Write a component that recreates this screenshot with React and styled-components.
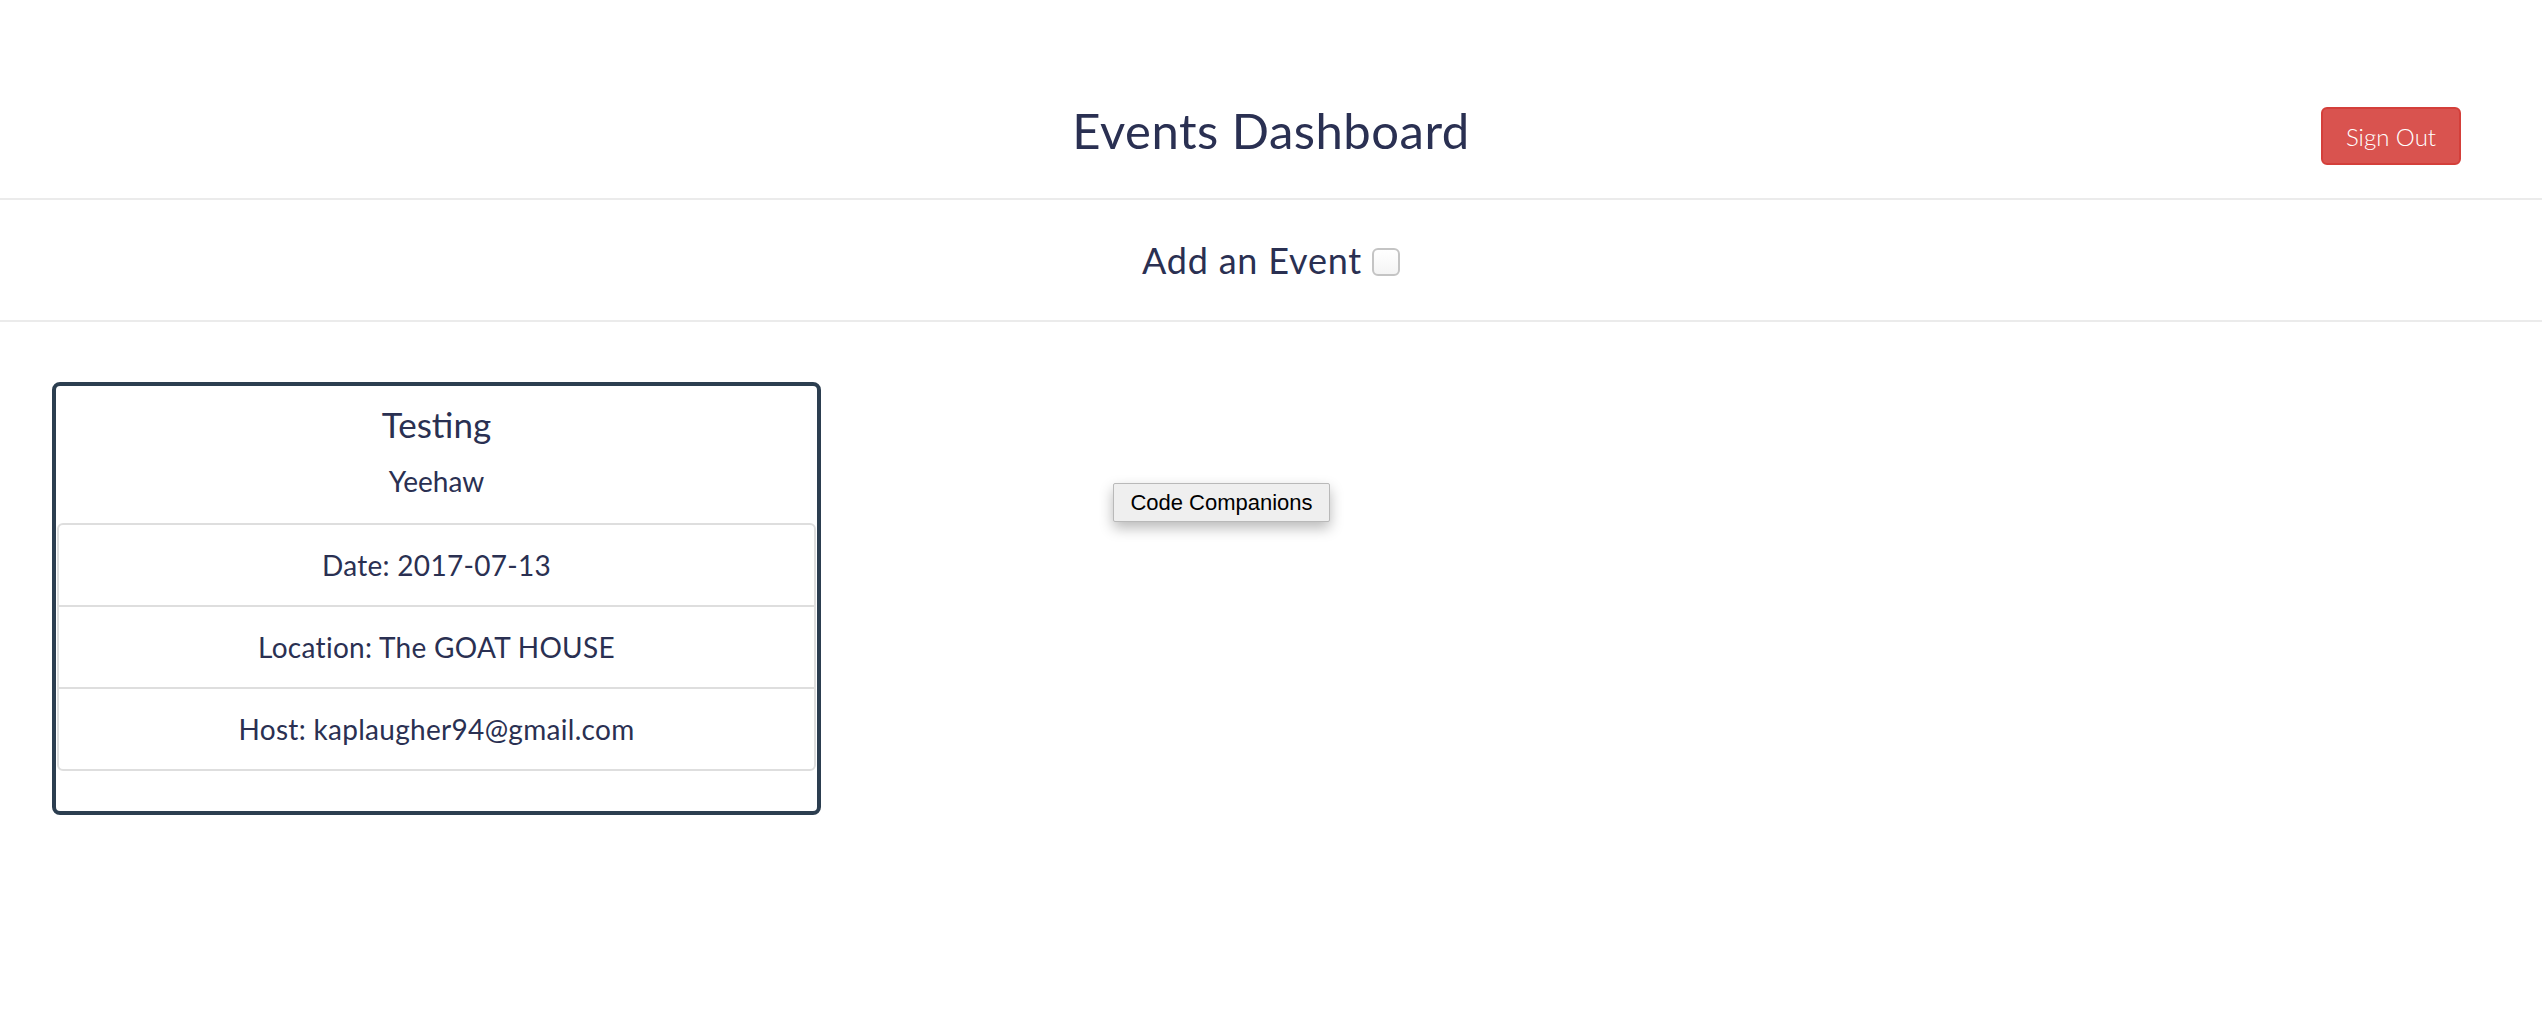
import React, { useState } from 'react';
import styled, { createGlobalStyle } from 'styled-components';

const event = {
  title: 'Testing',
  description: 'Yeehaw',
  date: '2017-07-13',
  location: 'The GOAT HOUSE',
  host: 'kaplaugher94@gmail.com',
};

const App = () => {
  const [showForm, setShowForm] = useState(false);

  return (
    <Page>
      <GlobalStyle />
      <Header>
        <span />
        <Title>Events Dashboard</Title>
        <SignOutButton type="button">Sign Out</SignOutButton>
      </Header>
      <AddBar>
        <AddLabel>
          Add an Event
          <Toggle type="checkbox" checked={showForm} onChange={() => setShowForm(!showForm)} />
        </AddLabel>
      </AddBar>
      <EventsArea>
        <EventCard>
          <EventTitle>{event.title}</EventTitle>
          <EventDescription>{event.description}</EventDescription>
          <DetailList>
            <DetailItem>Date: {event.date}</DetailItem>
            <DetailItem>Location: {event.location}</DetailItem>
            <DetailItem>Host: {event.host}</DetailItem>
          </DetailList>
        </EventCard>
      </EventsArea>
      <CompanionButton type="button">Code Companions</CompanionButton>
    </Page>
  );
};

// Styled Components
const GlobalStyle = createGlobalStyle`
  html, body {
    margin: 0;
    padding: 0;
    background: #fff;
  }
  body {
    font-family: 'Lato', 'Open Sans', sans-serif;
    color: #2a3052;
  }
`;

const Page = styled.div`
  position: relative;
  min-height: 1012px;
`;

const Header = styled.header`
  display: grid;
  grid-template-columns: 1fr auto 1fr;
  align-items: start;
  height: 200px;
  box-sizing: border-box;
  padding: 100px 81px 0;
  border-bottom: 2px solid #ebebeb;
`;

const Title = styled.h1`
  margin: 0;
  font-size: 49px;
  font-weight: 400;
  line-height: 60px;
  letter-spacing: 0.5px;
`;

const SignOutButton = styled.button`
  justify-self: end;
  margin-top: 7px;
  width: 140px;
  height: 58px;
  background: #d9534f;
  border: 2px solid #d43f3a;
  border-radius: 6px;
  color: #fff;
  font-family: 'Lato', sans-serif;
  font-size: 24px;
  font-weight: 300;
  cursor: pointer;
`;

const AddBar = styled.div`
  display: flex;
  align-items: center;
  justify-content: center;
  height: 122px;
  box-sizing: border-box;
  border-bottom: 2px solid #ebebeb;
`;

const AddLabel = styled.label`
  display: flex;
  align-items: center;
  gap: 10px;
  font-size: 36px;
  font-weight: 400;
  letter-spacing: 0.8px;
`;

const Toggle = styled.input`
  appearance: none;
  margin: 4px 0 0;
  width: 28px;
  height: 28px;
  border: 2px solid #c4c4c4;
  border-radius: 6px;
  background: linear-gradient(#fff, #f4f4f4);
  cursor: pointer;
  &:checked {
    background: #2a3052;
  }
`;

const EventsArea = styled.main`
  padding: 60px 52px;
`;

const EventCard = styled.section`
  width: 769px;
  box-sizing: border-box;
  border: 4px solid #2c3e50;
  border-radius: 8px;
  padding: 16px 0 40px;
  text-align: center;
`;

const EventTitle = styled.h3`
  margin: 0;
  font-size: 35px;
  font-weight: 400;
  line-height: 44px;
`;

const EventDescription = styled.p`
  margin: 17px 0 24px;
  font-size: 28px;
  line-height: 36px;
`;

const DetailList = styled.ul`
  list-style: none;
  margin: 0 1px;
  padding: 0;
  border: 2px solid #dedede;
  border-radius: 6px;
`;

const DetailItem = styled.li`
  padding: 21px 0;
  font-size: 28px;
  line-height: 38px;
  letter-spacing: 0.3px;
  & + & {
    border-top: 2px solid #dedede;
  }
`;

const CompanionButton = styled.button`
  position: absolute;
  left: 1113px;
  top: 483px;
  width: 217px;
  height: 39px;
  background: #efefef;
  border: 1px solid #b9b9b9;
  border-radius: 2px;
  box-shadow: 0 6px 14px rgba(0, 0, 0, 0.28);
  color: #000;
  font-family: 'Liberation Sans', Arial, sans-serif;
  font-size: 22px;
  padding: 0;
  cursor: pointer;
`;

export default App;
